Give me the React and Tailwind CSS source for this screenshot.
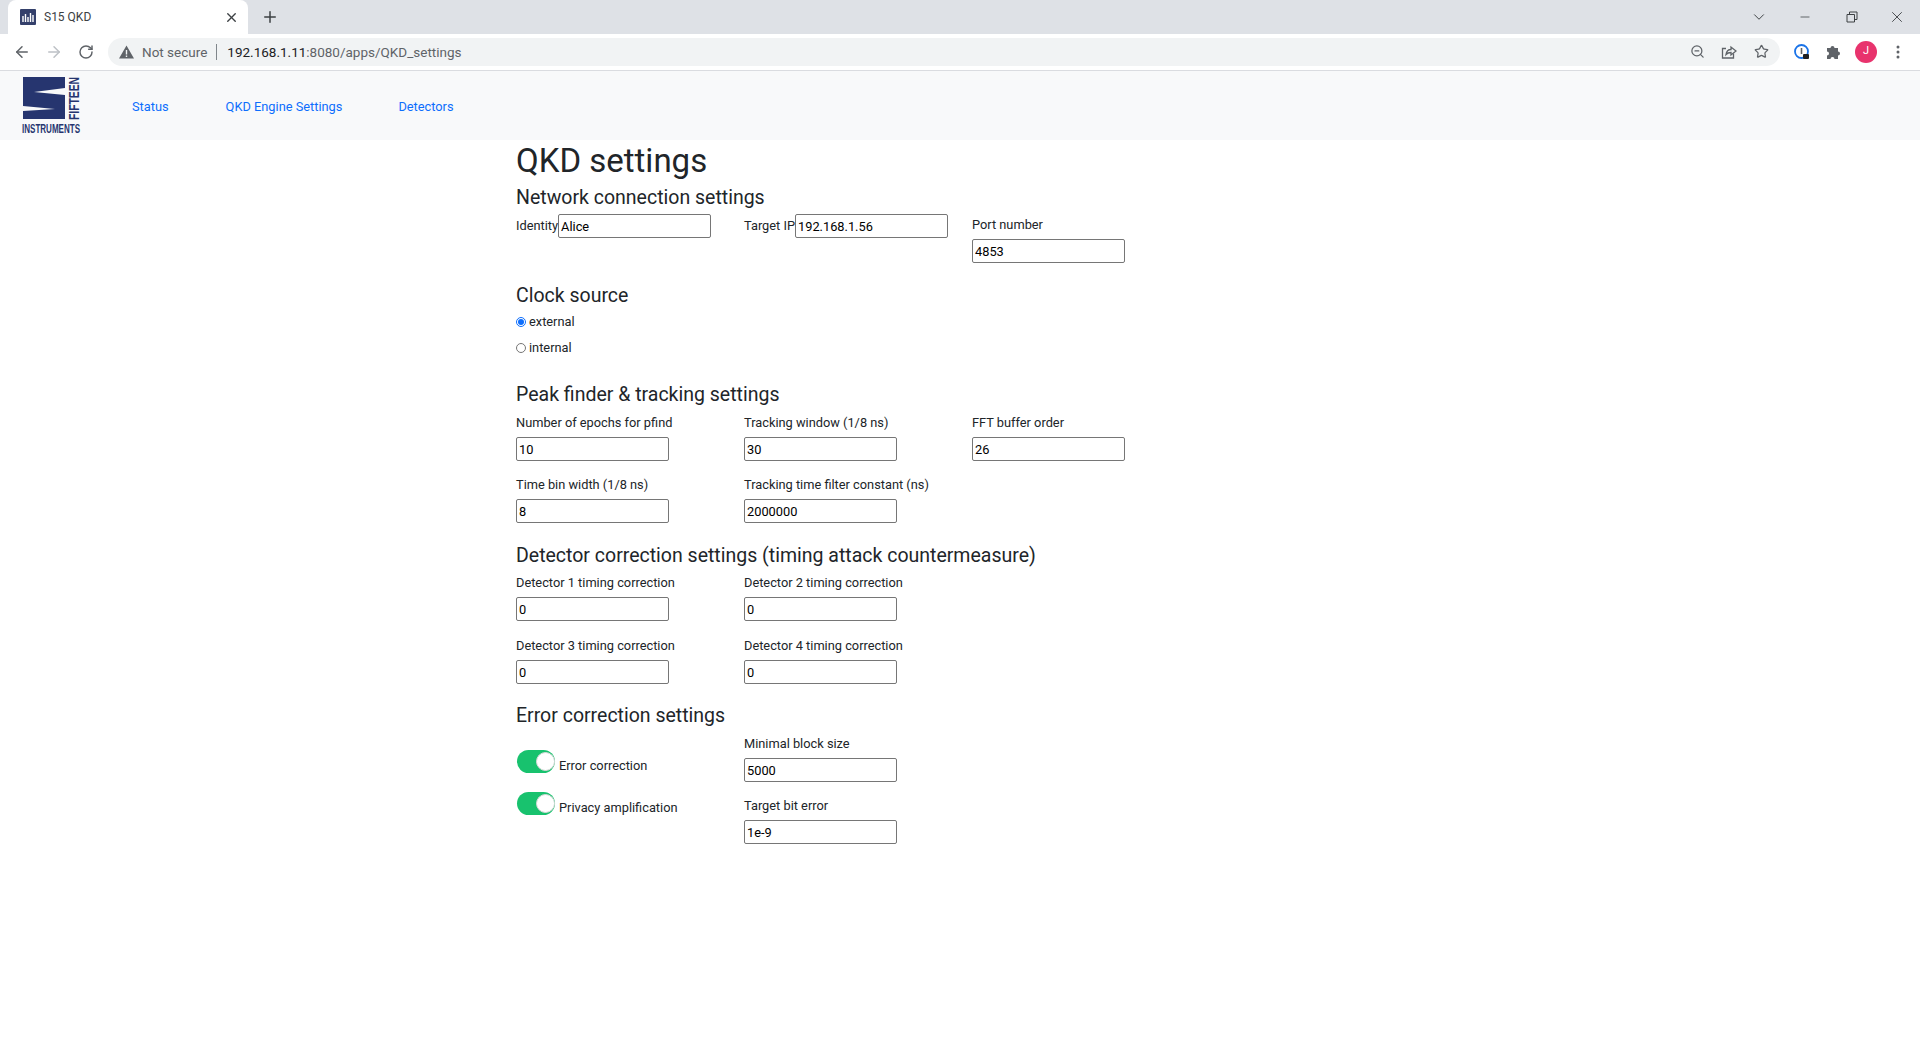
import { ArrowLeft, ArrowRight, RotateCw, X, Plus, ChevronDown, Minus, ZoomOut, Star } from 'lucide-react';

function Favicon() {
  return (
    <svg width="16" height="16" viewBox="0 0 16 16" className="shrink-0">
      <rect width="16" height="16" rx="1" fill="#34406b" />
      <path d="M3 7v6M5.5 5v8M8 8v5M10.5 4v9M13 6v7" stroke="#fff" strokeWidth="1.4" />
    </svg>
  );
}

function Logo() {
  return (
    <svg width="60" height="58" viewBox="0 0 60 58" className="shrink-0 overflow-visible">
      <path d="M1 0H43V11L12 15L43 18V42H1V34L33 32L1 29Z" fill="#26356f" />
      <text x="0" y="0" transform="translate(57 43) rotate(-90)" fontFamily="Liberation Sans, sans-serif" fontWeight="700" fontSize="14" fill="#26356f" textLength="43" lengthAdjust="spacingAndGlyphs">FIFTEEN</text>
      <text x="0" y="56" fontFamily="Liberation Sans, sans-serif" fontWeight="700" fontSize="13" fill="#26356f" textLength="58" lengthAdjust="spacingAndGlyphs">INSTRUMENTS</text>
    </svg>
  );
}

function BrowserBar() {
  return (
    <div>
      <div className="flex h-[34px] items-end bg-[#dee1e6] pl-2">
        <div className="flex h-[34px] w-[240px] items-center rounded-t-lg bg-white pl-3 pr-[9px]">
          <Favicon />
          <span className="ml-2 text-xs text-[#3c4043]">S15 QKD</span>
          <X size={15} strokeWidth={2.2} className="ml-auto text-[#3c4043]" />
        </div>
        <Plus size={18} strokeWidth={2} className="mb-2 ml-[13px] text-[#3c4043]" />
        <div className="ml-auto flex h-[34px] items-center text-[#3c4043]">
          <ChevronDown size={18} strokeWidth={1.3} />
          <Minus size={14} strokeWidth={1.3} className="ml-[30px]" />
          <svg width="12" height="12" viewBox="0 0 12 12" fill="none" stroke="currentColor" className="ml-[34px]">
            <path d="M1 3.5h7.5V11H1zM3.5 3.5V1H11v7.5H8.5" />
          </svg>
          <X size={18} strokeWidth={1.2} className="ml-[30px] mr-[14px]" />
        </div>
      </div>
      <div className="flex h-[37px] items-center border-b border-[#dadce0] bg-white pb-px">
        <ArrowLeft size={18} className="ml-[13px] text-[#5f6368]" />
        <ArrowRight size={18} className="ml-[14px] text-[#bdc1c6]" />
        <RotateCw size={16} strokeWidth={2.2} className="ml-[15px] text-[#5f6368]" />
        <div className="ml-[14px] flex h-7 w-[1672px] items-center rounded-full bg-[#f1f3f4] pl-[11px] pr-[10px]">
          <svg width="15" height="14" viewBox="0 0 15 14" fill="#5f6368">
            <path d="M7.5 0.5L15 13.5H0ZM6.8 5v4.5h1.4V5ZM6.8 10.4v1.5h1.4v-1.5Z" fillRule="evenodd" />
          </svg>
          <span className="ml-[8px] mt-px text-[13.5px] text-[#5f6368]">Not secure</span>
          <span className="ml-[9px] mr-[10px] h-4 w-px bg-[#80868b]" />
          <span className="mt-px text-[13.5px] text-[#202124]">192.168.1.11<span className="text-[#5f6368]">:8080/apps/QKD_settings</span></span>
          <ZoomOut size={15} className="ml-auto text-[#5f6368]" />
          <svg width="16" height="16" viewBox="0 0 16 16" fill="none" stroke="#5f6368" strokeWidth="1.3" className="ml-[16px]">
            <path d="M12.5 9.5V14H1.5V4.5H5" />
            <path d="M5 10.5C5.5 7 8 5.5 10 5.5V3l5 4-5 4V8.5c-2 0-3.7.5-5 2Z" />
          </svg>
          <Star size={15} className="ml-[17px] mr-[1px] text-[#5f6368]" />
        </div>
        <svg width="16" height="16" viewBox="0 0 16 16" fill="none" className="ml-[14px]">
          <circle cx="7.5" cy="7.5" r="6.5" stroke="#1a73e8" strokeWidth="1.8" />
          <path d="M7.5 4v6" stroke="#5f6368" strokeWidth="1.6" />
          <rect x="9" y="10" width="6" height="5" rx="1" fill="#202124" />
        </svg>
        <svg width="16" height="16" viewBox="0 0 16 16" fill="#5f6368" className="ml-[16px]">
          <path d="M1 4h3.5a2 2 0 1 1 4 0H12v3.5a2 2 0 1 1 0 4V15H8.5a2 2 0 1 0-4 0H1v-3.5a2 2 0 1 0 0-4z" />
        </svg>
        <div className="ml-[13px] flex size-[22px] items-center justify-center rounded-full bg-[#e8336d] text-[11px] text-white">J</div>
        <svg width="4" height="14" viewBox="0 0 4 14" fill="#5f6368" className="ml-[19px]">
          <circle cx="2" cy="2" r="1.5" />
          <circle cx="2" cy="7" r="1.5" />
          <circle cx="2" cy="12" r="1.5" />
        </svg>
      </div>
    </div>
  );
}

function Nav() {
  return (
    <nav className="flex h-[69px] items-center bg-[#f8f9fa] pl-[22px] text-[12.8px] text-[#0d6efd]">
      <Logo />
      <a className="ml-[50px] mt-[2px]">Status</a>
      <a className="ml-[57px] mt-[2px]">QKD Engine Settings</a>
      <a className="ml-[56px] mt-[2px]">Detectors</a>
    </nav>
  );
}

function TextInput({ value }) {
  return (
    <input
      defaultValue={value}
      className="block h-6 w-[153px] rounded-[2px] border border-[#767676] bg-white px-[2px] text-[12.8px] text-black outline-none"
    />
  );
}

function Field({ label, value }) {
  return (
    <div>
      <div className="mb-[6px] h-[19px] text-[12.8px] leading-[21px]">{label}</div>
      <TextInput value={value} />
    </div>
  );
}

function InlineField({ label, value }) {
  return (
    <div className="flex items-center self-start">
      <span className="text-[12.8px]">{label}</span>
      <TextInput value={value} />
    </div>
  );
}

function Heading({ className, children }) {
  return <h4 className={`h-[23px] text-[19.5px] font-[450] leading-[25px] ${className}`}>{children}</h4>;
}

function Radio({ label, checked }) {
  return (
    <label className="flex h-[21px] items-center text-[12.8px]">
      <input type="radio" name="clock" defaultChecked={checked} className="m-0 size-[10px] accent-[#0d6efd]" />
      <span className="ml-[3px]">{label}</span>
    </label>
  );
}

function Toggle({ label }) {
  return (
    <div className="flex h-[23px] items-center">
      <div className="flex h-[23px] w-[38px] items-center justify-end rounded-full bg-[#18c26e]">
        <div className="size-[19px] rounded-full border border-[#d8d8d8] bg-white" />
      </div>
      <span className="ml-[4px] mt-2 text-[12.8px]">{label}</span>
    </div>
  );
}

export default function App() {
  return (
    <div className="min-h-[1040px] bg-white font-['Roboto',sans-serif] text-[#212529]">
      <BrowserBar />
      <Nav />
      <main className="ml-[516px] w-[684px]">
        <h1 className="mt-px h-[38px] text-[33px] font-[450] leading-[40px]">QKD settings</h1>

        <Heading className="mt-[6px]">Network connection settings</Heading>
        <div className="mt-[6px] grid grid-cols-[228px_228px_228px]">
          <InlineField label="Identity" value="Alice" />
          <InlineField label="Target IP" value="192.168.1.56" />
          <Field label="Port number" value="4853" />
        </div>

        <Heading className="mt-5">Clock source</Heading>
        <div className="mt-[5px] flex flex-col gap-[5px]">
          <Radio label="external" checked />
          <Radio label="internal" />
        </div>

        <Heading className="mt-6">Peak finder &amp; tracking settings</Heading>
        <div className="mt-[7px] grid grid-cols-[228px_228px_228px] gap-y-[13px]">
          <Field label="Number of epochs for pfind" value="10" />
          <Field label="Tracking window (1/8 ns)" value="30" />
          <Field label="FFT buffer order" value="26" />
          <Field label="Time bin width (1/8 ns)" value="8" />
          <Field label="Tracking time filter constant (ns)" value="2000000" />
        </div>

        <Heading className="mt-5">Detector correction settings (timing attack countermeasure)</Heading>
        <div className="mt-[6px] grid grid-cols-[228px_228px_228px] gap-y-[14px]">
          <Field label="Detector 1 timing correction" value="0" />
          <Field label="Detector 2 timing correction" value="0" />
          <div className="col-start-1">
            <Field label="Detector 3 timing correction" value="0" />
          </div>
          <Field label="Detector 4 timing correction" value="0" />
        </div>

        <Heading className="mt-[19px]">Error correction settings</Heading>
        <div className="mt-[7px] grid grid-cols-[228px_228px_228px]">
          <div className="flex flex-col gap-[19px] pl-px pt-[17px]">
            <Toggle label="Error correction" />
            <Toggle label="Privacy amplification" />
          </div>
          <div className="flex flex-col gap-[13px]">
            <Field label="Minimal block size" value="5000" />
            <Field label="Target bit error" value="1e-9" />
          </div>
        </div>
      </main>
    </div>
  );
}
